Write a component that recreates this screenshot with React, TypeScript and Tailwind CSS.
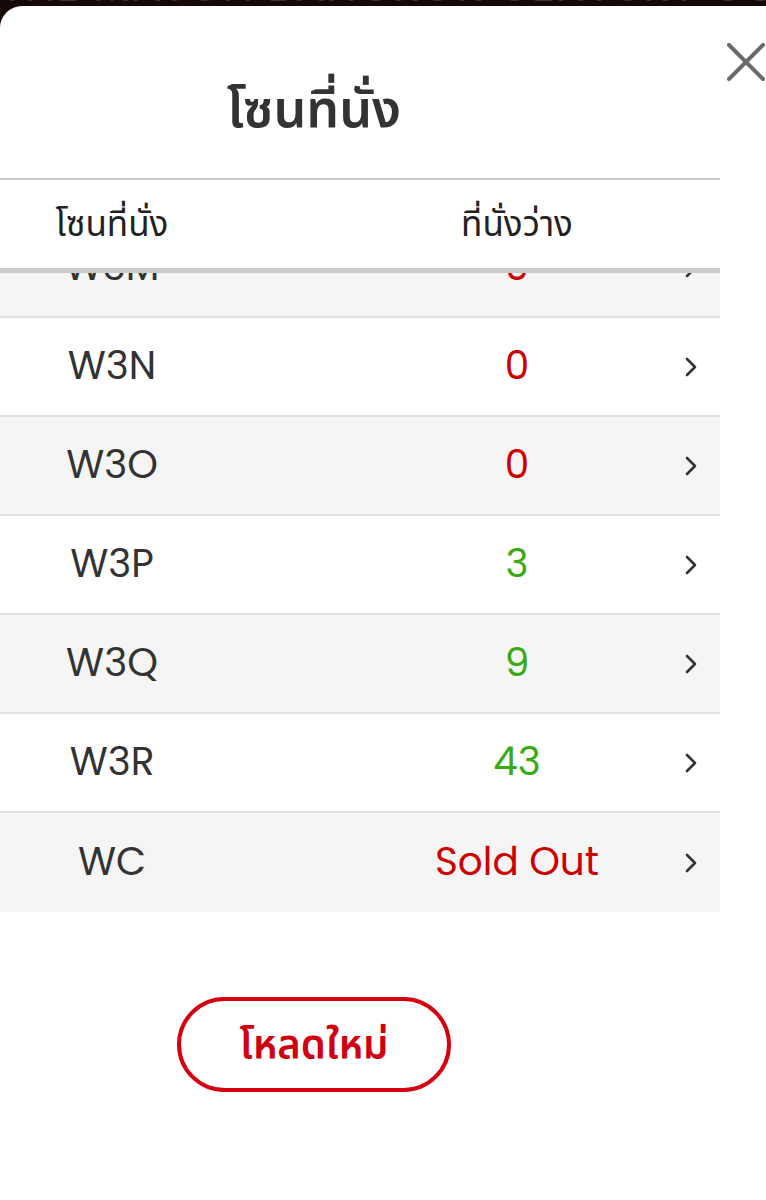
const rows = [
  { zone: "W3M", seats: "0", color: "text-[#cc0000]", bg: "bg-[#f5f5f5]" },
  { zone: "W3N", seats: "0", color: "text-[#cc0000]", bg: "bg-white" },
  { zone: "W3O", seats: "0", color: "text-[#cc0000]", bg: "bg-[#f5f5f5]" },
  { zone: "W3P", seats: "3", color: "text-[#3aaa14]", bg: "bg-white" },
  { zone: "W3Q", seats: "9", color: "text-[#3aaa14]", bg: "bg-[#f5f5f5]" },
  { zone: "W3R", seats: "43", color: "text-[#3aaa14]", bg: "bg-white" },
  { zone: "WC", seats: "Sold Out", color: "text-[#cc0000]", bg: "bg-[#f5f5f5]" },
];

const thai = "font-['Poppins','Roboto','Noto_Sans','Noto_Sans_Thai',sans-serif]";

const Chevron = () => (
  <svg width="14" height="22" viewBox="0 0 14 22" fill="none">
    <path d="M3 3l8 8-8 8" stroke="#333" strokeWidth="2.6" strokeLinecap="round" strokeLinejoin="round" />
  </svg>
);

export default function App() {
  return (
    <div className={`w-[766px] h-[1200px] bg-[#150807] overflow-hidden ${thai}`}>
      <div className="h-[6px] overflow-hidden">
        <div className="-mt-[34px] text-[44px] leading-[40px] text-[#3a3232] whitespace-nowrap tracking-wide">
          THE MATCH BANGKOK CENTURY CUP
        </div>
      </div>
      <div className="relative h-[1194px] bg-white rounded-tl-[22px]">
        <button className="absolute right-0 top-[36px] w-[40px] h-[40px] flex items-center justify-center">
          <svg width="38" height="38" viewBox="0 0 38 38">
            <path d="M2 2l34 34M36 2L2 36" stroke="#6b6b6b" strokeWidth="4" strokeLinecap="round" />
          </svg>
        </button>

        <div className="w-[628px] pt-[68px] h-[172px] text-center text-[52px] leading-[70px] font-semibold text-[#333]">
          โซนที่นั่ง
        </div>

        <div className="w-[720px]">
          <div className="flex items-center h-[95px] border-t-2 border-b-[5px] border-[#cbcbcb] bg-white text-[35px] leading-[50px] text-[#222]">
            <div className="w-[224px] text-center">โซนที่นั่ง</div>
            <div className="w-[90px]" />
            <div className="w-[406px] text-center">ที่นั่งว่าง</div>
          </div>
          <div className="overflow-hidden">
            {rows.map((r, i) => (
              <div
                key={r.zone}
                className={`relative flex items-center h-[99px] text-[39px] ${r.bg} ${i === 0 ? "-mt-[54px]" : ""} ${
                  i < rows.length - 1 ? "border-b-2 border-[#e0e0e6]" : ""
                }`}
              >
                <div className="w-[224px] text-center text-[#333]">{r.zone}</div>
                <div className="w-[90px]" />
                <div className={`w-[406px] text-center ${r.color}`}>{r.seats}</div>
                <div className="absolute right-[22px] top-1/2 -translate-y-1/2">
                  <Chevron />
                </div>
              </div>
            ))}
          </div>
        </div>

        <div className="w-[628px] flex justify-center pt-[85px]">
          <button className="w-[274px] h-[95px] rounded-full border-4 border-[#d40010] bg-white text-[40px] font-semibold text-[#d00010]">
            โหลดใหม่
          </button>
        </div>
      </div>
    </div>
  );
}
